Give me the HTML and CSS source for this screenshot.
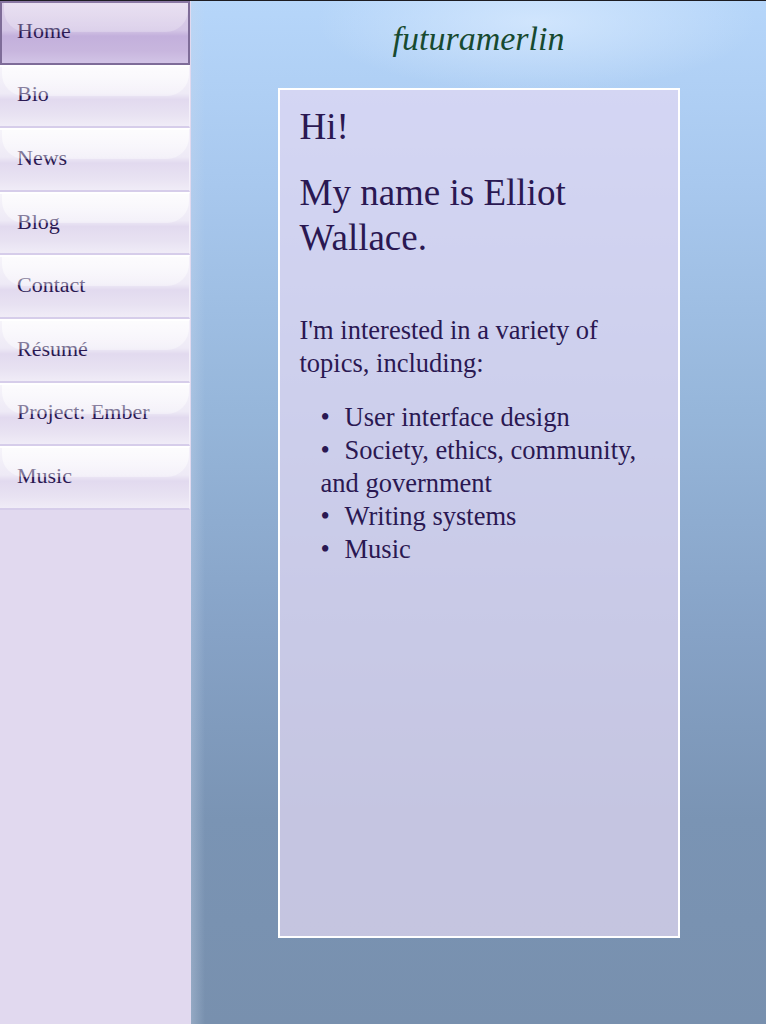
FILE: index.html
```html
<!DOCTYPE html>
<html lang="en">
<head>
<meta charset="utf-8">
<title>futuramerlin</title>
<link rel="stylesheet" href="styles.css">
</head>
<body>
<div class="page">
  <nav class="sidebar">
    <a class="nav-item active" href="#">Home</a>
    <a class="nav-item" href="#">Bio</a>
    <a class="nav-item" href="#">News</a>
    <a class="nav-item" href="#">Blog</a>
    <a class="nav-item" href="#">Contact</a>
    <a class="nav-item" href="#">Résumé</a>
    <a class="nav-item" href="#">Project: Ember</a>
    <a class="nav-item" href="#">Music</a>
  </nav>
  <main class="main">
    <h1 class="site-title">futuramerlin</h1>
    <section class="content">
      <h2 class="greeting">Hi!</h2>
      <h2 class="intro">My name is Elliot Wallace.</h2>
      <p class="lead">I'm interested in a variety of topics, including:</p>
      <ul class="topics">
        <li>User interface design</li>
        <li>Society, ethics, community, and government</li>
        <li>Writing systems</li>
        <li>Music</li>
      </ul>
    </section>
  </main>
</div>
</body>
</html>
```

FILE: styles.css
```css
html, body {
  margin: 0;
  padding: 0;
  height: 100%;
}
body {
  font-family: "Liberation Serif", "DejaVu Serif", serif;
  color: #2a1852;
  border-top: 1px solid #1c1c22;
  box-sizing: border-box;
  overflow: hidden;
}
.page {
  display: flex;
  height: 1023px;
}
.sidebar {
  width: 191px;
  flex: 0 0 191px;
  background: #e1d9ef;
  display: flex;
  flex-direction: column;
}
.nav-item {
  position: relative;
  display: flex;
  align-items: center;
  box-sizing: border-box;
  height: 63.6px;
  width: 190px;
  padding: 0 0 4px 17px;
  font-size: 22px;
  color: #2a1852;
  text-decoration: none;
  background: linear-gradient(to bottom, #f6f4fa 0%, #eeeaf6 45%, #e2daef 55%, #e8e2f2 80%, #f0ecf7 100%);
  border-top: 2px solid #ffffff;
  border-bottom: 2px solid #d6cdea;
  border-right: 1px solid #f4f0fa;
}
.nav-item::before {
  content: "";
  position: absolute;
  left: 2px;
  right: 0;
  top: 0;
  height: 29px;
  border-radius: 0 0 22px 22px;
  background: linear-gradient(to bottom, rgba(255,255,255,0.7), rgba(255,255,255,0.35));
}
.nav-item.active {
  padding-left: 15px;
  background: linear-gradient(to bottom, #ddd0ea 0%, #d4c6e6 45%, #c3b0dc 55%, #c8b6de 80%, #d2c4e6 100%);
  border: 2px solid #7e6c98;
  border-top-color: #8a78a4;
}
.nav-item.active::before {
  background: linear-gradient(to bottom, rgba(255,255,255,0.35), rgba(255,255,255,0.2));
}
.main {
  flex: 1;
  display: flex;
  flex-direction: column;
  align-items: center;
  background:
    radial-gradient(ellipse 220px 70px at 60% 2%, rgba(220,236,255,0.7), rgba(220,236,255,0) 100%),
    linear-gradient(to right, rgba(200,215,235,0.35) 0px, rgba(200,215,235,0) 14px),
    linear-gradient(to bottom, #b6d6fa 0%, #a8c8ee 18%, #96b6da 40%, #86a2c6 62%, #7a94b4 80%, #7890ae 100%);
}
.site-title {
  margin: 14px 0 0;
  height: 73px;
  font-size: 34px;
  font-weight: normal;
  font-style: italic;
  color: #174a30;
  line-height: 48px;
}
.content {
  box-sizing: border-box;
  width: 402px;
  height: 850px;
  border: 2px solid #ffffff;
  background: rgba(226, 216, 242, 0.72);
  padding: 14px 20px 20px 20px;
}
.greeting, .intro {
  margin: 0;
  font-weight: normal;
  font-size: 37px;
  line-height: 45px;
}
.greeting {
  margin-bottom: 21px;
}
.intro {
  margin-bottom: 54px;
}
.lead {
  margin: 0 0 21px;
  font-size: 26.5px;
  line-height: 33px;
}
.topics {
  margin: 0;
  padding: 0 0 0 21px;
  list-style: none;
  font-size: 26.5px;
  line-height: 33px;
}
.topics li::before {
  content: "•";
  display: inline-block;
  width: 24px;
}
```
